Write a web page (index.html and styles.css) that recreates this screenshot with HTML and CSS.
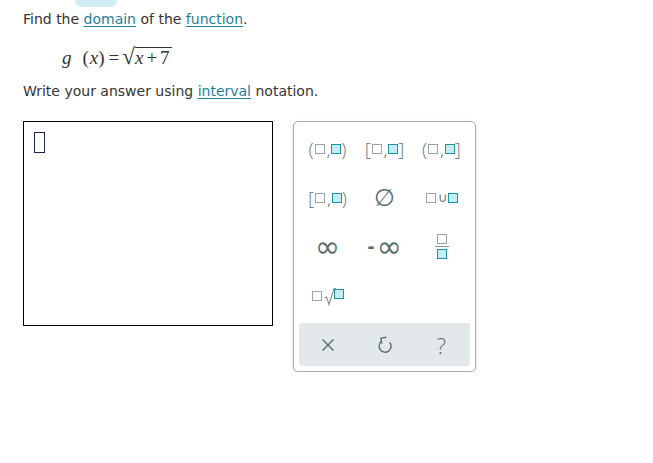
FILE: index.html
```html
<!DOCTYPE html>
<html>
<head>
<meta charset="utf-8">
<link rel="stylesheet" href="styles.css">
</head>
<body>
<div class="tab"></div>
<div class="content">
  <p class="line first">Find the <a class="lnk">domain</a> of the <a class="lnk">function</a>.</p>
  <div class="eq"><span class="it">g</span><span class="op">(</span><span class="it">x</span>)<span class="eqs">=</span><span class="rad">√</span><span class="under"><span class="it">x</span><span class="pl">+</span>7</span></div>
  <p class="line second">Write your answer using <a class="lnk">interval</a> notation.</p>
  <div class="work">
    <div class="answer"><span class="cursor"></span></div>
    <div class="pad">
      <div class="keys">
        <div class="key"><span class="br">(</span><span class="sq g"></span><span class="cm">,</span><span class="sq t"></span><span class="br">)</span></div>
        <div class="key"><span class="br">[</span><span class="sq g"></span><span class="cm">,</span><span class="sq t"></span><span class="br">]</span></div>
        <div class="key"><span class="br">(</span><span class="sq g"></span><span class="cm">,</span><span class="sq t"></span><span class="br">]</span></div>
        <div class="key"><span class="br">[</span><span class="sq g"></span><span class="cm">,</span><span class="sq t"></span><span class="br">)</span></div>
        <div class="key"><span class="empty">∅</span></div>
        <div class="key"><span class="sq g"></span><span class="cup">∪</span><span class="sq t"></span></div>
        <div class="key"><span class="inf">∞</span></div>
        <div class="key"><span class="inf"><span class="mn">-</span>∞</span></div>
        <div class="key"><span class="frac"><span class="sq g"></span><span class="bar"></span><span class="sq t"></span></span></div>
        <div class="key"><span class="sq g"></span><svg class="radsvg" width="12" height="20" viewBox="0 0 12 20"><path d="M0.5 12 L2.5 11 L5 18.5 L10 2.5 L12 2.5" fill="none" stroke="#8a979c" stroke-width="1.2"/></svg><span class="sq t sqr"></span></div>
        <div class="key"></div>
        <div class="key"></div>
      </div>
      <div class="tools">
        <div class="tool"><svg width="14" height="14" viewBox="0 0 14 14"><path d="M1.5 1.5 L12.5 12.5 M12.5 1.5 L1.5 12.5" stroke="#5d7078" stroke-width="1.5" fill="none"/></svg></div>
        <div class="tool"><svg class="undo" width="16" height="18" viewBox="0 0 16 18"><path d="M4.8 5.2 A6 6 0 1 0 12.6 6.2" stroke="#5d7078" stroke-width="1.4" fill="none"/><path d="M9.5 2.4 H3.8 V7.6" stroke="#5d7078" stroke-width="1.4" fill="none" transform="rotate(-12 3.8 2.4)"/></svg></div>
        <div class="tool"><span class="q">?</span></div>
      </div>
    </div>
  </div>
</div>
</body>
</html>
```
FILE: styles.css
```css
html, body { margin: 0; padding: 0; background: #fff; }
body { font-family: "DejaVu Sans", Verdana, sans-serif; font-size: 14px; color: #333; }
.tab { width: 42px; height: 7px; margin-left: 75px; background: #d2ecf3; border-radius: 0 0 12px 12px; }
.content { padding-left: 23px; }
.line { margin: 0; line-height: 18px; }
.first { margin-top: 3px; }
.lnk { color: #1f7f9a; text-decoration: underline; text-decoration-color: #1f7f9a; text-underline-offset: 2px; }
.eq { font-family: "Liberation Serif", "Times New Roman", serif; font-size: 19px; color: #333; margin: 15px 0 0 39px; height: 28px; line-height: 28px; display: flex; align-items: baseline; }
.eq .it { font-style: italic; }
.op { margin-left: 11px; margin-right: 1px; }
.eqs { margin: 0 3px 0 4px; }
.pl { margin: 0 3px; }
.rad { font-size: 23px; margin-left: 0; }
.under { border-top: 1px solid #333; line-height: 19px; padding-right: 2px; }
.second { margin-top: 11px; }
.work { display: flex; align-items: flex-start; margin-top: 21px; gap: 20px; }
.answer { border: 1px solid #000; padding: 10px 0 0 10px; width: 238px; height: 193px; }
.cursor { display: block; width: 9px; height: 19px; border: 1px solid #1d2357; }
.pad { width: 171px; border: 1px solid #a7afb3; border-radius: 5px; padding: 2px 5px 5px 5px; box-shadow: 0 1px 3px rgba(0,0,0,0.18); }
.keys { display: grid; grid-template-columns: repeat(3, 1fr); grid-auto-rows: 49px; }
.key { display: flex; align-items: center; justify-content: center; color: #6c7c83; }
.br { font-family: "Open Sans", sans-serif; font-weight: 300; font-size: 19px; line-height: 20px; color: #6c7c83; }
.cm { font-family: "Open Sans", sans-serif; font-size: 14px; color: #6c7c83; margin: 4px 1px 0 1px; }
.sq { display: inline-block; width: 8px; height: 8px; border: 1.5px solid #9aa3a7; background: #fff; }
.sq.g { margin: 0 1px; }
.sq.t { border-color: #1b93a3; background: #c3ecf3; }
.empty { font-family: "DejaVu Sans", sans-serif; font-size: 24px; color: #5b6c73; }
.cup { font-family: "DejaVu Sans", sans-serif; font-size: 13px; color: #6c7c83; margin: 0 1px; }
.inf { font-family: "DejaVu Sans", sans-serif; font-size: 30px; line-height: 30px; color: #5b6c73; display: flex; align-items: center; }
.mn { font-size: 18px; font-weight: bold; margin-right: 2px; }
.frac { display: flex; flex-direction: column; align-items: center; gap: 2px; }
.frac .bar { width: 14px; height: 1.5px; background: #8a979c; }
.radsvg { margin-left: 1px; }
.sqr { margin-left: -2px; margin-top: -4px; }
.tools { display: flex; background: #e3e8ea; border-radius: 3px; height: 43px; margin-top: 3px; }
.tool { flex: 1; display: flex; align-items: center; justify-content: center; }
.q { font-family: "Open Sans", sans-serif; font-weight: 300; font-size: 22px; color: #5d7078; }
```
